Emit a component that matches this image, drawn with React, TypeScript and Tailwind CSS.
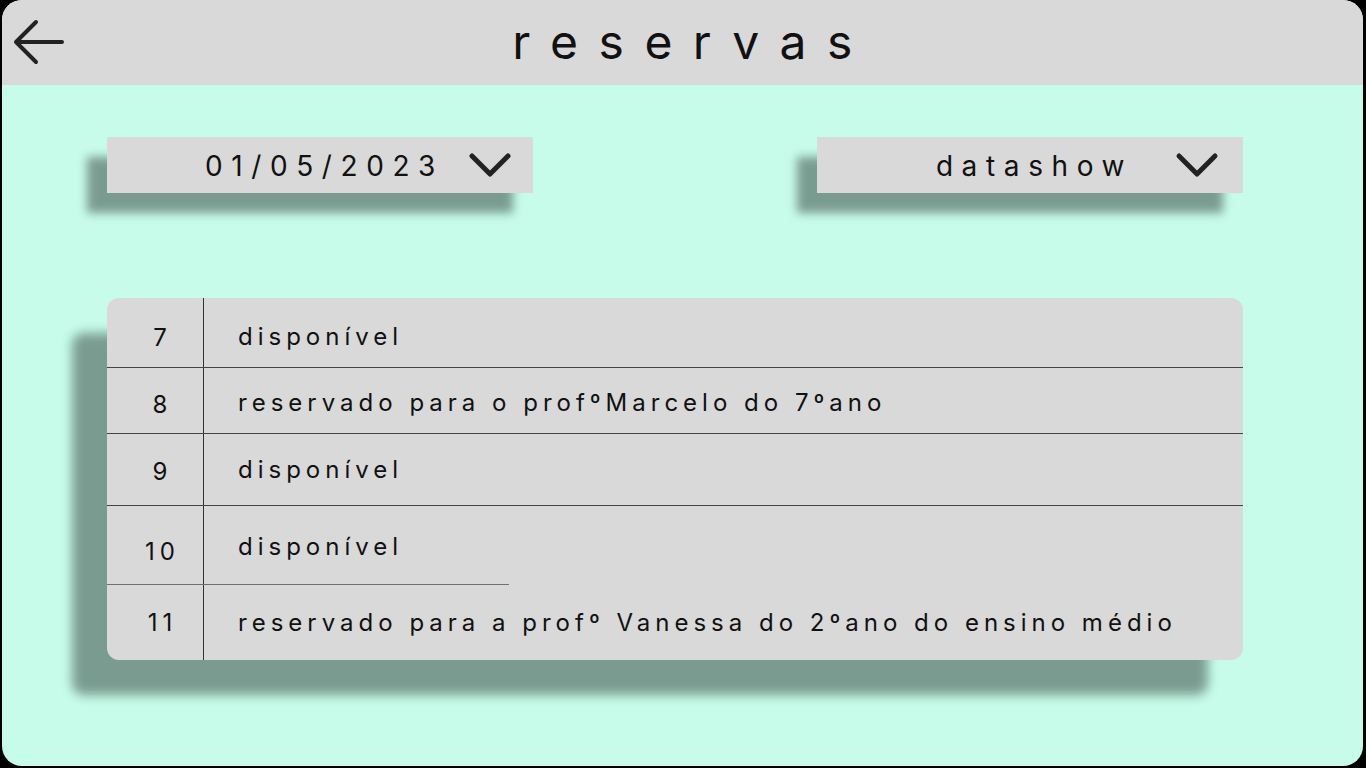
import React from 'react';

const rows = [
  { n: '7', text: 'disponível', h: 'h-[70px]', numPad: 'pt-[9px]', textPad: 'pt-[7px]', line: 'full' },
  { n: '8', text: 'reservado para o profºMarcelo do 7ºano', h: 'h-[66px]', numPad: 'pt-[8px]', textPad: 'pt-[3px]', line: 'full' },
  { n: '9', text: 'disponível', h: 'h-[72px]', numPad: 'pt-[4px]', textPad: 'pb-[1px]', line: 'full' },
  { n: '10', text: 'disponível', h: 'h-[79px]', numPad: 'pt-[13px]', textPad: 'pt-[3px]', line: 'partial' },
  { n: '11', text: 'reservado para a profº Vanessa do 2ºano do ensino médio', h: 'h-[75px]', numPad: 'pt-[1px]', textPad: 'pt-[1px]', line: 'none' },
];

const Chevron: React.FC<{ right: string }> = ({ right }) => (
  <svg width="44" height="28" viewBox="0 0 44 28" className={`absolute top-[15px] ${right}`}>
    <path d="M4 4 L22 22 L40 4" fill="none" stroke="#222" strokeWidth="5" strokeLinecap="round" strokeLinejoin="round" />
  </svg>
);

const Select: React.FC<{ label: string; right: string }> = ({ label, right }) => (
  <div className="relative w-[426px] h-[56px] bg-[#d9d9d9] shadow-[-20px_20px_9px_rgba(0,0,0,0.38)] flex items-center justify-center">
    <span className="text-[28px] tracking-[8.6px] pl-[9px] pt-[2px] text-[#111] leading-none">{label}</span>
    <Chevron right={right} />
  </div>
);

const App: React.FC = () => {
  return (
    <div className="w-[1366px] h-[768px] bg-black pl-[2px] pr-[3px] pb-[2px]" style={{ fontFamily: 'Inter, "Noto Sans", sans-serif' }}>
      <div className="w-full h-full rounded-[20px] overflow-hidden bg-[#c6fce9] flex flex-col">
        <header className="relative h-[85px] bg-[#d9d9d9] flex items-center justify-center shrink-0">
          <svg width="56" height="50" viewBox="0 0 56 50" className="absolute left-[9px] top-[17px]">
            <path d="M5 25 L51 25 M25 5 L5 25 L25 45" fill="none" stroke="#222" strokeWidth="4" strokeLinecap="round" strokeLinejoin="round" />
          </svg>
          <h1 className="text-[48px] tracking-[20.5px] pl-[20px] text-[#111] leading-none pb-[2px]">reservas</h1>
        </header>

        <main className="pl-[105px] pt-[52px]">
          <div className="w-[1136px] flex justify-between">
            <Select label="01/05/2023" right="right-[21px]" />
            <Select label="datashow" right="right-[24px]" />
          </div>

          <div className="mt-[105px] w-[1136px] bg-[#d9d9d9] rounded-[12px] shadow-[-35px_35px_11px_rgba(0,0,0,0.38)] text-[24px] tracking-[5px] text-[#111]">
            {rows.map((r) => (
              <div key={r.n} className={`relative flex ${r.h}`}>
                <div className={`w-[97px] border-r border-[#333] flex items-center justify-center pl-[15px] ${r.numPad}`}>
                  {r.n}
                </div>
                <div className={`flex items-center pl-[34px] ${r.textPad}`}>{r.text}</div>
                {r.line === 'full' && <div className="absolute left-0 right-0 bottom-0 h-px bg-[#444]" />}
                {r.line === 'partial' && <div className="absolute left-0 w-[402px] bottom-0 h-[1.5px] bg-[#6f6f6f]" />}
              </div>
            ))}
          </div>
        </main>
      </div>
    </div>
  );
};

export default App;
